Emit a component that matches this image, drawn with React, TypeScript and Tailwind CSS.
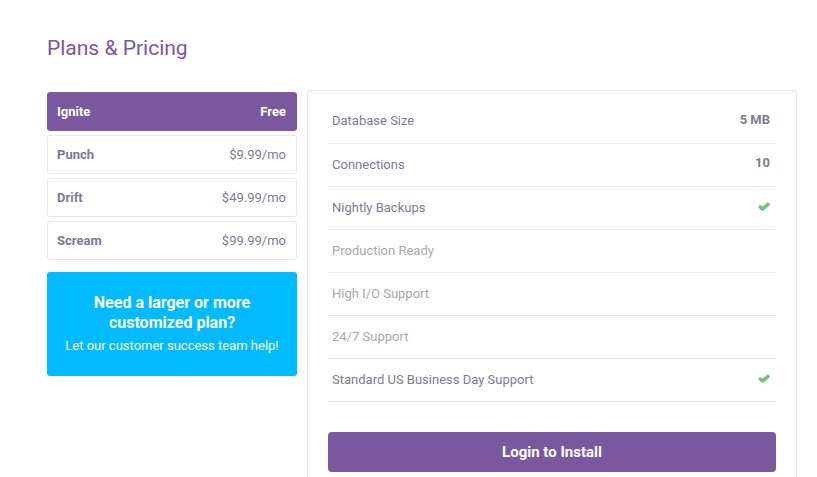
const plans = [
  { name: "Ignite", price: "Free" },
  { name: "Punch", price: "$9.99/mo" },
  { name: "Drift", price: "$49.99/mo" },
  { name: "Scream", price: "$99.99/mo" },
];

type Feature = { label: string; value?: string; included: boolean };

const features: Feature[] = [
  { label: "Database Size", value: "5 MB", included: true },
  { label: "Connections", value: "10", included: true },
  { label: "Nightly Backups", included: true },
  { label: "Production Ready", included: false },
  { label: "High I/O Support", included: false },
  { label: "24/7 Support", included: false },
  { label: "Standard US Business Day Support", included: true },
];

function Check() {
  return (
    <svg viewBox="0 0 12 9" className="ml-auto h-[9px] w-3" role="img" aria-label="Included">
      <path d="M0.3 4.9 2 3.2 4.5 4.7 9.8 0.6 12 2.5 5.9 8.2H3.3Z" fill="#6fbf82" stroke="#6fbf82" strokeWidth="0.4" strokeLinejoin="round" />
    </svg>
  );
}

function PlanButton({ name, price, selected }: { name: string; price: string; selected: boolean }) {
  return (
    <button
      type="button"
      aria-pressed={selected}
      className={`flex h-[39px] w-full items-center justify-between rounded-[3px] border pr-2.5 pl-[9px] text-[13px] leading-5 ${
        selected ? "border-[#79589f] bg-[#79589f] text-white" : "border-[#e7e7e7] bg-white text-[#7d7c8e]"
      }`}
    >
      <span className="font-bold">{name}</span>
      <span className={selected ? "font-bold" : ""}>{price}</span>
    </button>
  );
}

export default function App() {
  return (
    <main className="flex min-h-screen flex-col bg-white pr-5 pl-[47px] font-['Roboto','Liberation_Sans',sans-serif]">
      <h1 className="pt-8 text-[21px] leading-8 font-normal text-[#79589f]">Plans &amp; Pricing</h1>
      <div className="mt-[26px] flex grow gap-2.5">
        <div className="w-[250px] shrink-0 pt-0.5">
          <div className="flex flex-col gap-1">
            {plans.map((plan, i) => (
              <PlanButton key={plan.name} {...plan} selected={i === 0} />
            ))}
          </div>
          <a href="#contact" className="mt-3 block rounded-[3px] bg-[#00bbff] px-4 pt-[21px] pb-5 text-center text-white">
            <strong className="mx-auto block w-[180px] text-base leading-5 font-bold">Need a larger or more customized plan?</strong>
            <span className="mt-[3px] block text-[13px] leading-5">Let our customer success team help!</span>
          </a>
        </div>
        <section className="min-w-0 grow rounded-t-[3px] border border-b-0 border-[#e7e7e7] px-5 pt-[9px] pb-1">
          <table className="w-full border-collapse text-[13px] leading-5">
            <tbody>
              {features.map(({ label, value, included }) => (
                <tr key={label} className="h-[43px] border-b border-[#e7e7e7]">
                  <th scope="row" className={`pl-1 text-left font-normal ${included ? "text-[#7d7c8e]" : "text-[#a9a9a9]"}`}>
                    {label}
                  </th>
                  <td className="pr-1.5 pb-[3px] text-right font-bold text-[#7d7c8e]">{value ?? (included ? <Check /> : null)}</td>
                </tr>
              ))}
            </tbody>
          </table>
          <button type="button" className="mt-[30px] h-10 w-full rounded bg-[#79589f] text-[15px] leading-5 font-bold text-white">
            Login to Install
          </button>
        </section>
      </div>
    </main>
  );
}
